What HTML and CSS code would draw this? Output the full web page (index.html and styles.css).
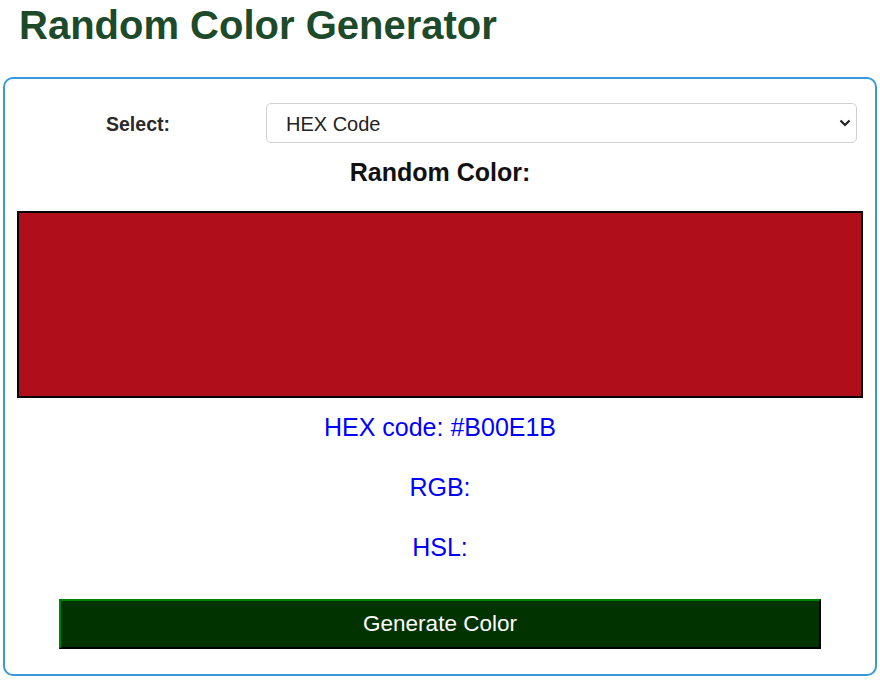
FILE: index.html
```html
<!DOCTYPE html>
<html lang="en">

<head>
    <meta charset="UTF-8">
    <meta name="viewport" content="width=device-width, initial-scale=1.0">
    <title>Random Color Generator</title>
    <link rel="stylesheet" href="styles.css">
</head>

<body>

    <h1>Random Color Generator</h1>

    <div class="container">

        <!-- Tipo de código -->
        <div class="select-row">
            <label for="tipo">Select:</label>
            <div class="select-wrap">
                <select id="tipo">
                    <option>HEX Code</option>
                    <option>RGB Code</option>
                    <option>HSL Code</option>
                </select>
                <svg class="chevron" width="12" height="8" viewBox="0 0 12 8">
                    <path d="M1.5 1.5 L6 6 L10.5 1.5" fill="none" stroke="#222" stroke-width="2.2" />
                </svg>
            </div>
        </div>

        <h2>Random Color:</h2>

        <div class="color-box" id="colorBox"></div>

        <p class="code">HEX code: #B00E1B</p>
        <p class="code">RGB:</p>
        <p class="code">HSL:</p>

        <button>Generate Color</button>
    </div>

</body>

</html>
```

FILE: styles.css
```css
body {
    font-family: "Liberation Sans", Arial, sans-serif;
    margin: 0 3px 5px;
    background-color: #fff;
}

h1 {
    font-size: 40px;
    line-height: 46px;
    color: #1d4a2b;
    margin: 0 0 30px;
    padding: 2px 0 0 16px;
    height: 47px;
    box-sizing: border-box;
}

.container {
    border: 2px solid #3a98d8;
    border-radius: 10px;
    padding: 24px 0 25px;
    display: flex;
    flex-direction: column;
}

.select-row {
    display: flex;
    align-items: center;
    padding: 0 18px;
}

.select-row label {
    width: 230px;
    margin-right: 13px;
    text-align: center;
    font-size: 19.5px;
    font-weight: bold;
    color: #2a2a2a;
    padding-top: 2px;
}

.select-wrap {
    position: relative;
    flex: 1;
}

.select-wrap select {
    width: 100%;
    height: 40px;
    appearance: none;
    font-family: inherit;
    font-size: 20px;
    color: #222;
    background-color: #fff;
    border: 1px solid #d0d0d0;
    border-radius: 5px;
    padding: 2px 19px 0;
}

.chevron {
    position: absolute;
    right: 6px;
    top: 16px;
    pointer-events: none;
}

h2 {
    text-align: center;
    font-size: 25px;
    line-height: 28px;
    color: #111;
    margin: 15px 0 25px;
}

.color-box {
    height: 183px;
    margin: 0 12px;
    border: 2px solid #000;
    background-color: #b00e1b;
}

.code {
    text-align: center;
    font-size: 25px;
    line-height: 28px;
    color: #0000ff;
    margin: 15px 0 17px;
}

.code + .code {
    margin-top: 15px;
}

button {
    margin: 21px 54px 0;
    height: 50px;
    font-family: inherit;
    font-size: 22.5px;
    color: #fff;
    background-color: #003300;
    border: 2px solid;
    border-color: #008000 #000 #000 #008000;
    cursor: pointer;
}

button:hover {
    background-color: #004400;
}
```
